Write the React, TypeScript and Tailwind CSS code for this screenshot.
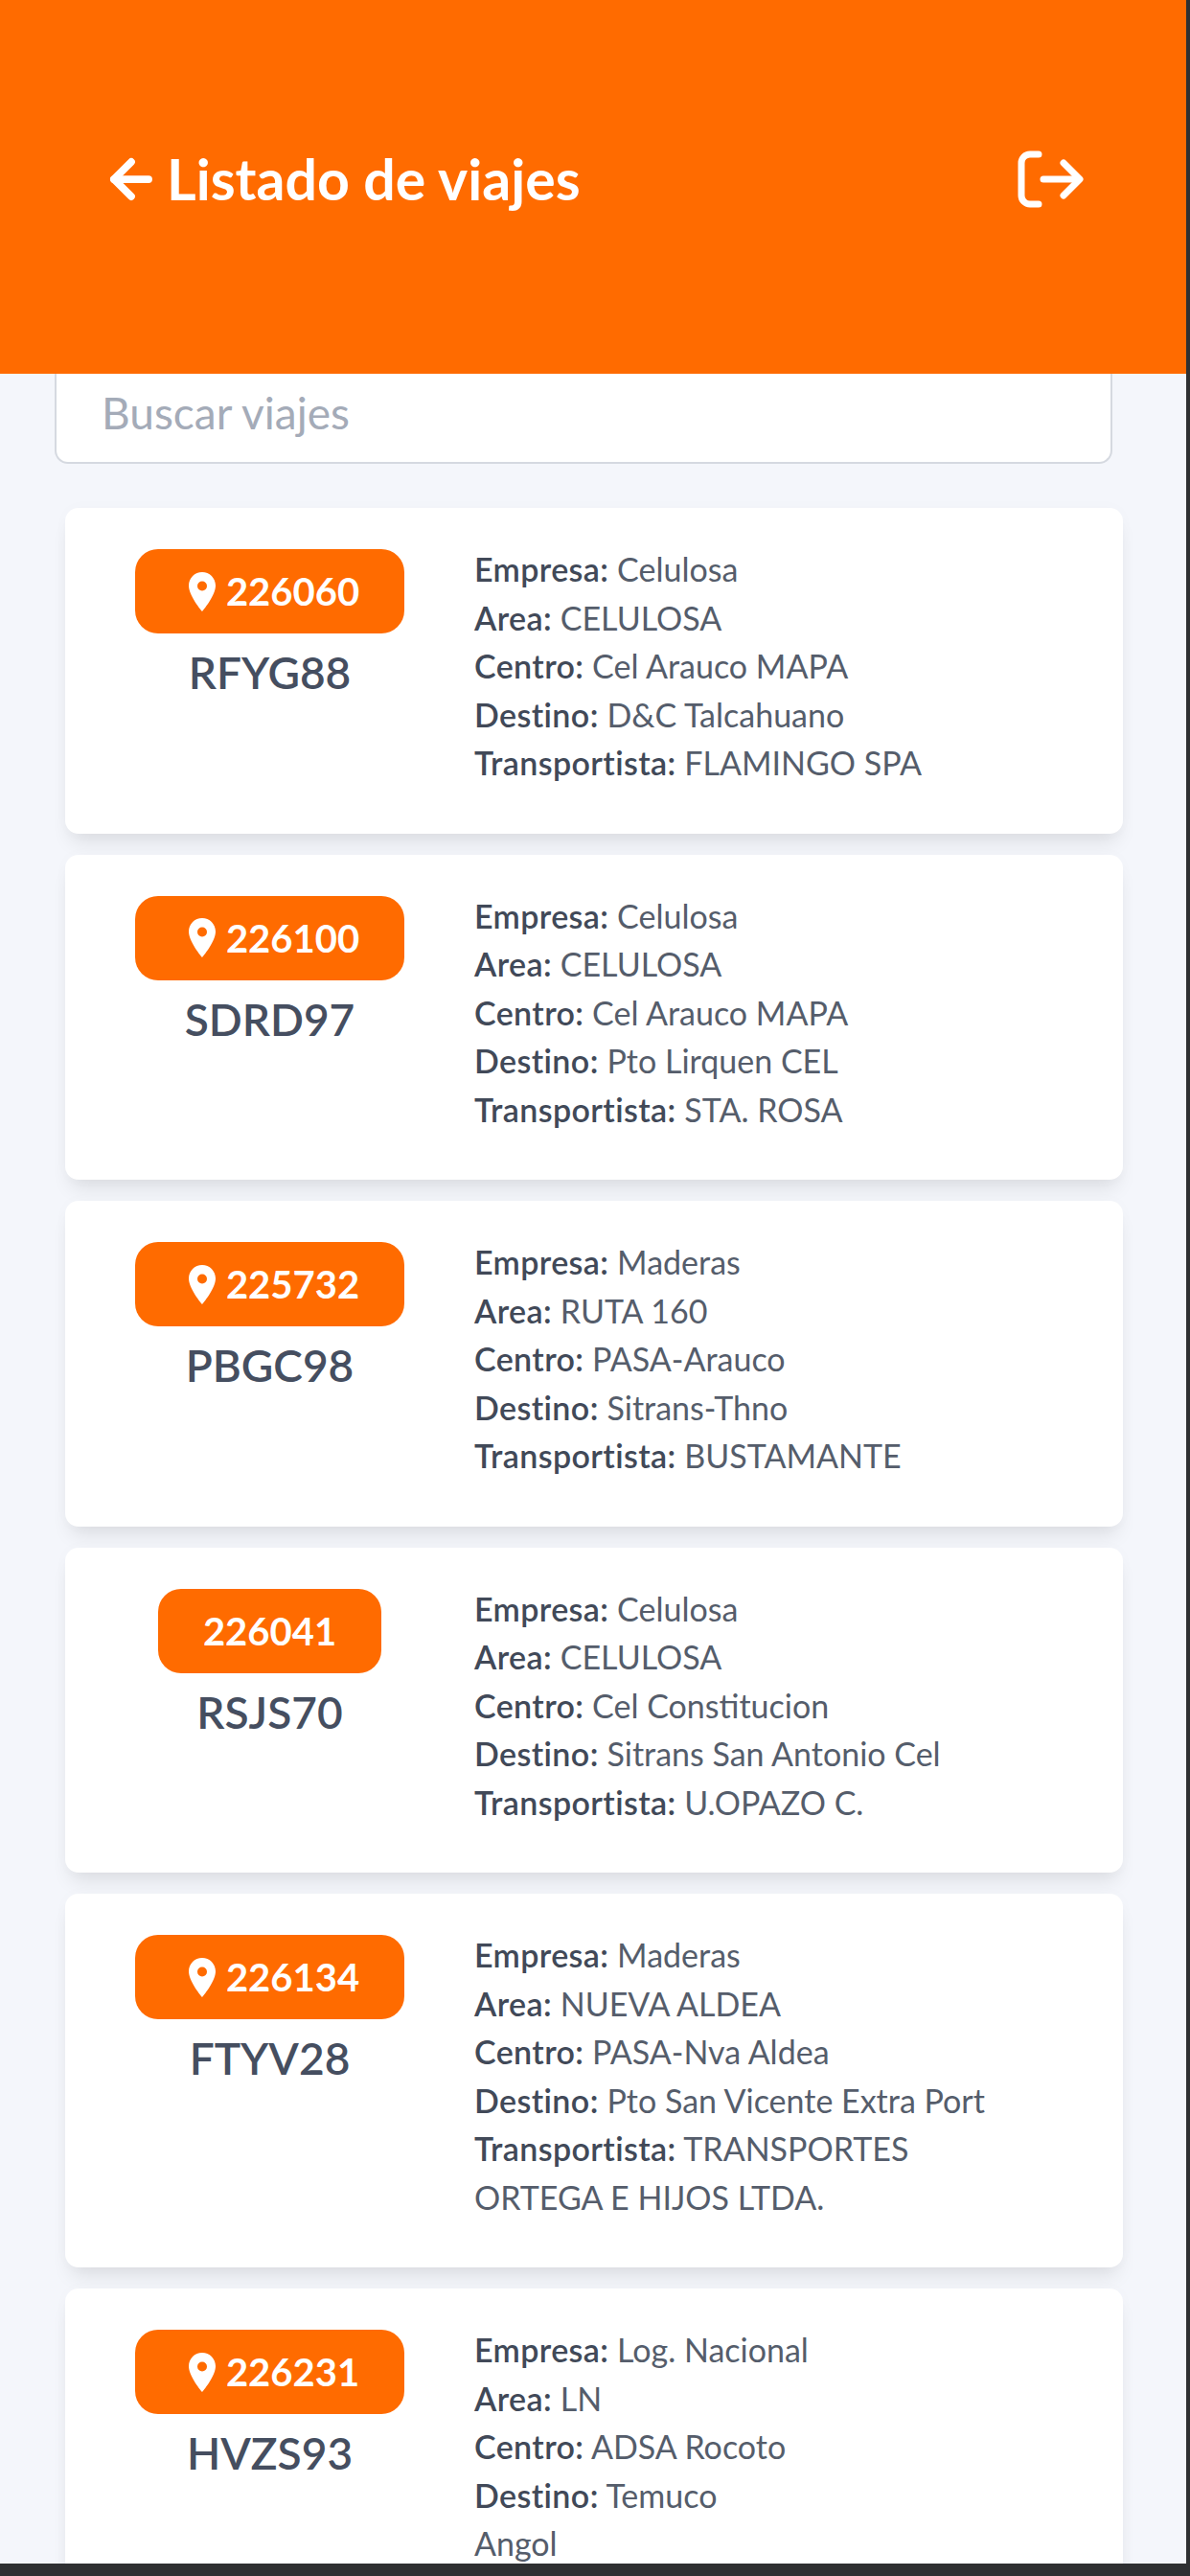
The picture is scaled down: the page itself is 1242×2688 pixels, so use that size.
import { ArrowLeft } from 'lucide-react'

interface Viaje {
  id: string
  patente: string
  empresa: string
  area: string
  centro: string
  destino: string
  transportista?: string
  extra?: string
  located?: boolean
}

const viajes: Viaje[] = [
  { id: '226060', patente: 'RFYG88', empresa: 'Celulosa', area: 'CELULOSA', centro: 'Cel Arauco MAPA', destino: 'D&C Talcahuano', transportista: 'FLAMINGO SPA', located: true },
  { id: '226100', patente: 'SDRD97', empresa: 'Celulosa', area: 'CELULOSA', centro: 'Cel Arauco MAPA', destino: 'Pto Lirquen CEL', transportista: 'STA. ROSA', located: true },
  { id: '225732', patente: 'PBGC98', empresa: 'Maderas', area: 'RUTA 160', centro: 'PASA-Arauco', destino: 'Sitrans-Thno', transportista: 'BUSTAMANTE', located: true },
  { id: '226041', patente: 'RSJS70', empresa: 'Celulosa', area: 'CELULOSA', centro: 'Cel Constitucion', destino: 'Sitrans San Antonio Cel', transportista: 'U.OPAZO C.' },
  { id: '226134', patente: 'FTYV28', empresa: 'Maderas', area: 'NUEVA ALDEA', centro: 'PASA-Nva Aldea', destino: 'Pto San Vicente Extra Port', transportista: 'TRANSPORTES ORTEGA E HIJOS LTDA.', located: true },
  { id: '226231', patente: 'HVZS93', empresa: 'Log. Nacional', area: 'LN', centro: 'ADSA Rocoto', destino: 'Temuco', extra: 'Angol', located: true },
]

function PinIcon() {
  return (
    <svg className="mr-[11px] ml-[9px] h-[41px] w-[28px] shrink-0" viewBox="0 0 28 41" fill="#ffffff">
      <path
        fillRule="evenodd"
        d="M14 0C6.300 0 0 6.200 0 14c0 9.500 11 23.500 14 27 3-3.500 14-17.500 14-27C28 6.200 21.700 0 14 0Zm0 9.500a5 5 0 1 1 0 10 5 5 0 0 1 0-10Z"
      />
    </svg>
  )
}

function LogoutIcon() {
  return (
    <svg className="h-[60px] w-[70px]" viewBox="0 0 70 60" fill="none" stroke="#ffffff" strokeWidth={7} strokeLinecap="round" strokeLinejoin="round">
      <path d="M22 4H13a9 9 0 0 0-9 9v34a9 9 0 0 0 9 9h9" />
      <path d="M27 30h36" />
      <path d="M48 13l17 17-17 17" />
    </svg>
  )
}

function Linea({ label, value }: { label: string; value: string }) {
  return (
    <p>
      <span className="font-semibold tracking-[0.4px] text-[#414958]">{label}:</span> {value}
    </p>
  )
}

function ViajeCard({ viaje }: { viaje: Viaje }) {
  return (
    <div className="flex rounded-[14px] bg-white pt-[39px] pb-[48px] shadow-[0_14px_20px_-6px_rgba(0,0,0,0.1),0_0_18px_rgba(0,0,0,0.02)]">
      <div className="flex w-[427px] shrink-0 flex-col items-center pt-[4px]">
        <div className="flex h-[88px] items-center rounded-[24px] bg-[#ff6b00] px-[47px] text-[40px] font-bold text-white">
          {viaje.located && <PinIcon />}
          {viaje.id}
        </div>
        <div className="mt-[11px] text-[46px] leading-[60px] font-semibold text-[#454e60]">{viaje.patente}</div>
      </div>
      <div className="w-[550px] text-[34px] leading-[50.500px] text-[#555d6b]">
        <Linea label="Empresa" value={viaje.empresa} />
        <Linea label="Area" value={viaje.area} />
        <Linea label="Centro" value={viaje.centro} />
        <Linea label="Destino" value={viaje.destino} />
        {viaje.transportista && <Linea label="Transportista" value={viaje.transportista} />}
        {viaje.extra && <p>{viaje.extra}</p>}
      </div>
    </div>
  )
}

export default function App() {
  return (
    <div className="flex h-[2688px] w-[1242px] flex-col overflow-hidden bg-[#2f3032] font-['Lato','Noto_Sans',sans-serif]">
      <div className="flex min-h-0 flex-1">
        <div className="flex min-w-0 flex-1 flex-col bg-[#f4f6fb]">
          {/* Header */}
          <header className="flex h-[390px] shrink-0 items-center justify-between bg-[#ff6b00] px-[106px] pb-[16px] text-white">
            <div className="flex items-center gap-[6px]">
              <ArrowLeft size={62} strokeWidth={3} />
              <h1 className="text-[59px] font-bold">Listado de viajes</h1>
            </div>
            <LogoutIcon />
          </header>

          {/* Buscador */}
          <div className="shrink-0 px-[57px]">
            <div className="flex h-[94px] w-[1104px] items-center rounded-b-[14px] border-x-2 border-b-2 border-[#d5d9e0] bg-white pb-[12px] pl-[47px] text-[46px] text-[#a4abb8]">
              Buscar viajes
            </div>
          </div>

          {/* Listado */}
          <div className="mt-[46px] flex w-[1172px] flex-col gap-[22px] pl-[68px]">
            {viajes.map((viaje) => (
              <ViajeCard key={viaje.id} viaje={viaje} />
            ))}
          </div>
        </div>
        <div className="w-[4px] shrink-0 bg-[#2f3032]" />
      </div>
      <div className="h-[13px] shrink-0 bg-[#2f3032]" />
    </div>
  )
}
